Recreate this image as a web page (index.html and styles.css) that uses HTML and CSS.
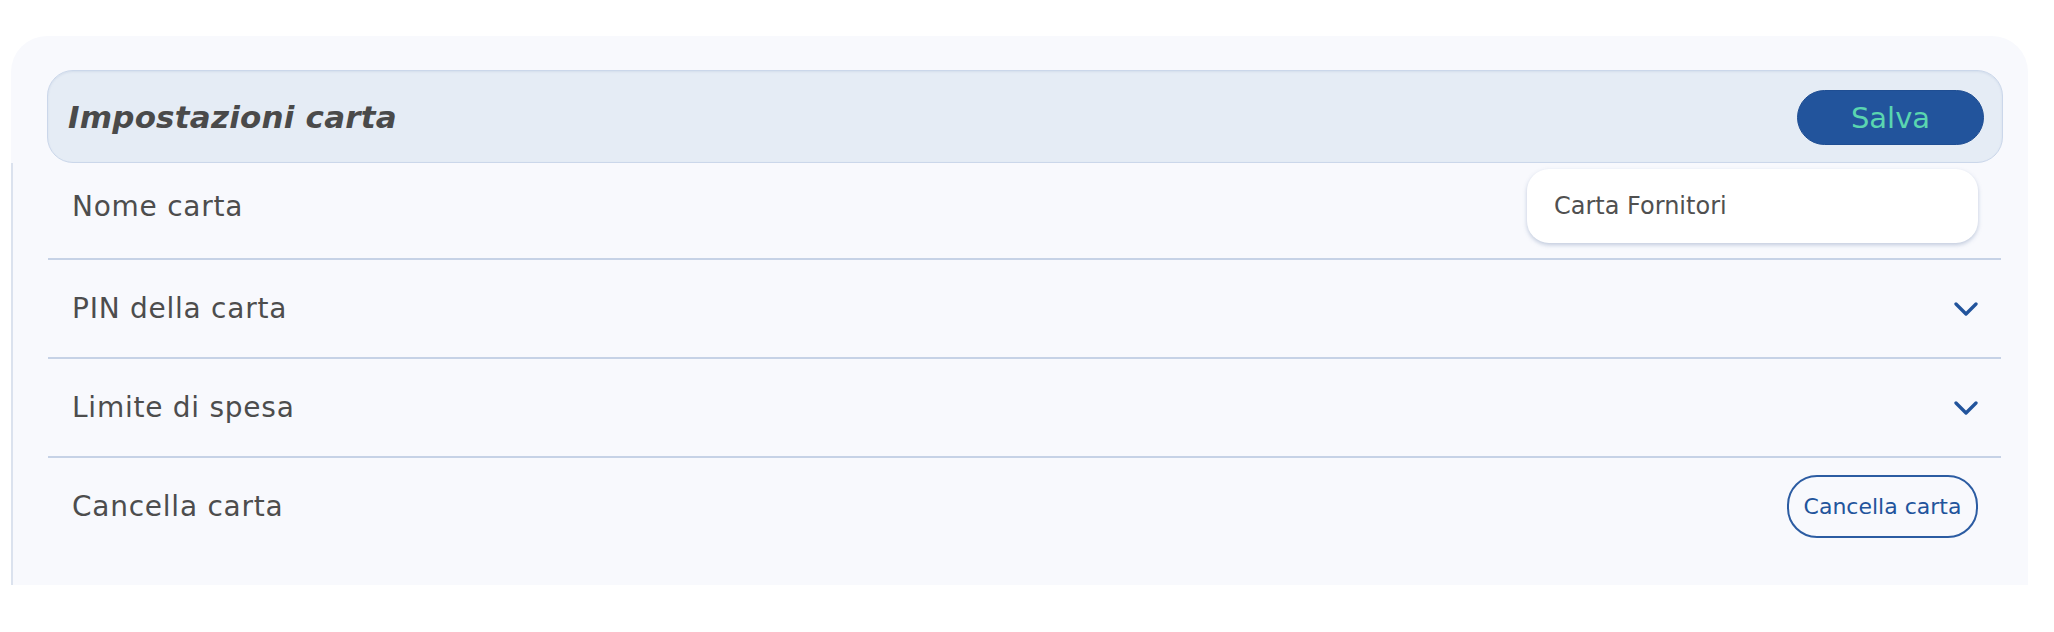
FILE: index.html
```html
<!DOCTYPE html>
<html lang="it">
<head>
<meta charset="utf-8">
<title>Impostazioni carta</title>
<link rel="stylesheet" href="styles.css">
</head>
<body>
<div class="card">
  <div class="card-head">
    <div class="header">
      <h1 class="title">Impostazioni carta</h1>
      <button class="btn-save">Salva</button>
    </div>
  </div>
  <div class="card-body">
    <div class="row row-name">
      <span class="label">Nome carta</span>
      <div class="input">Carta Fornitori</div>
    </div>
    <div class="row row-toggle">
      <span class="label">PIN della carta</span>
      <svg class="chev" width="24" height="14" viewBox="0 0 24 14"><path d="M2 2 L12 12 L22 2" fill="none" stroke="#22549c" stroke-width="3.3" stroke-linecap="round" stroke-linejoin="round"/></svg>
    </div>
    <div class="row row-toggle">
      <span class="label">Limite di spesa</span>
      <svg class="chev" width="24" height="14" viewBox="0 0 24 14"><path d="M2 2 L12 12 L22 2" fill="none" stroke="#22549c" stroke-width="3.3" stroke-linecap="round" stroke-linejoin="round"/></svg>
    </div>
    <div class="row row-delete">
      <span class="label">Cancella carta</span>
      <button class="btn-delete">Cancella carta</button>
    </div>
  </div>
</div>
</body>
</html>
```
FILE: styles.css
```css
html, body {
  margin: 0;
  padding: 0;
  background: #ffffff;
  font-family: "DejaVu Sans", "Liberation Sans", sans-serif;
}
.card {
  margin: 36px 0 0 11px;
  width: 2017px;
  background: #f8f9fd;
  border-radius: 36px 36px 0 0;
  padding-top: 34px;
}
.card-head {
  padding: 0 25px 0 36px;
}
.header {
  height: 91px;
  background: #e5ecf5;
  border: 1px solid #cbd7ea;
  border-radius: 26px;
  display: flex;
  align-items: center;
  justify-content: space-between;
  padding: 0 18px 0 20px;
  box-shadow: inset 0 1px 2px rgba(120, 145, 190, 0.15);
}
.title {
  margin: 0;
  font-size: 31px;
  font-weight: bold;
  font-style: italic;
  letter-spacing: 0.2px;
  color: #4a4a4a;
}
.btn-save {
  width: 187px;
  height: 55px;
  border: 1px solid #1f4e93;
  border-radius: 28px;
  background: #22549c;
  color: #5ad6b0;
  font-family: inherit;
  font-size: 29px;
  padding: 0;
  margin-top: 2px;
}
.card-body {
  border-left: 2px solid #dbe2ee;
  padding: 0 27px 0 35px;
  height: 422px;
}
.row {
  display: flex;
  align-items: center;
  justify-content: space-between;
  border-bottom: 2px solid #c6d2e6;
  padding: 0 23px 0 24px;
  box-sizing: border-box;
}
.label {
  font-size: 28px;
  letter-spacing: 0.75px;
  color: #4d4d4d;
}
.row-name {
  height: 97px;
  padding-bottom: 9px;
}
.input {
  width: 451px;
  height: 74px;
  box-sizing: border-box;
  background: #ffffff;
  border-radius: 22px;
  box-shadow: 0 2px 4px rgba(90, 115, 160, 0.35);
  display: flex;
  align-items: center;
  padding-left: 27px;
  font-size: 24px;
  color: #505050;
}
.row-toggle {
  height: 99px;
}
.chev {
  display: block;
}
.row-delete {
  border-bottom: none;
  align-items: flex-start;
  padding-top: 17px;
}
.row-delete .label {
  line-height: 63px;
}
.btn-delete {
  width: 191px;
  height: 63px;
  border: 2px solid #2c5ca2;
  border-radius: 30px;
  background: transparent;
  color: #22549c;
  font-family: inherit;
  font-size: 22px;
  padding: 0;
}
```
